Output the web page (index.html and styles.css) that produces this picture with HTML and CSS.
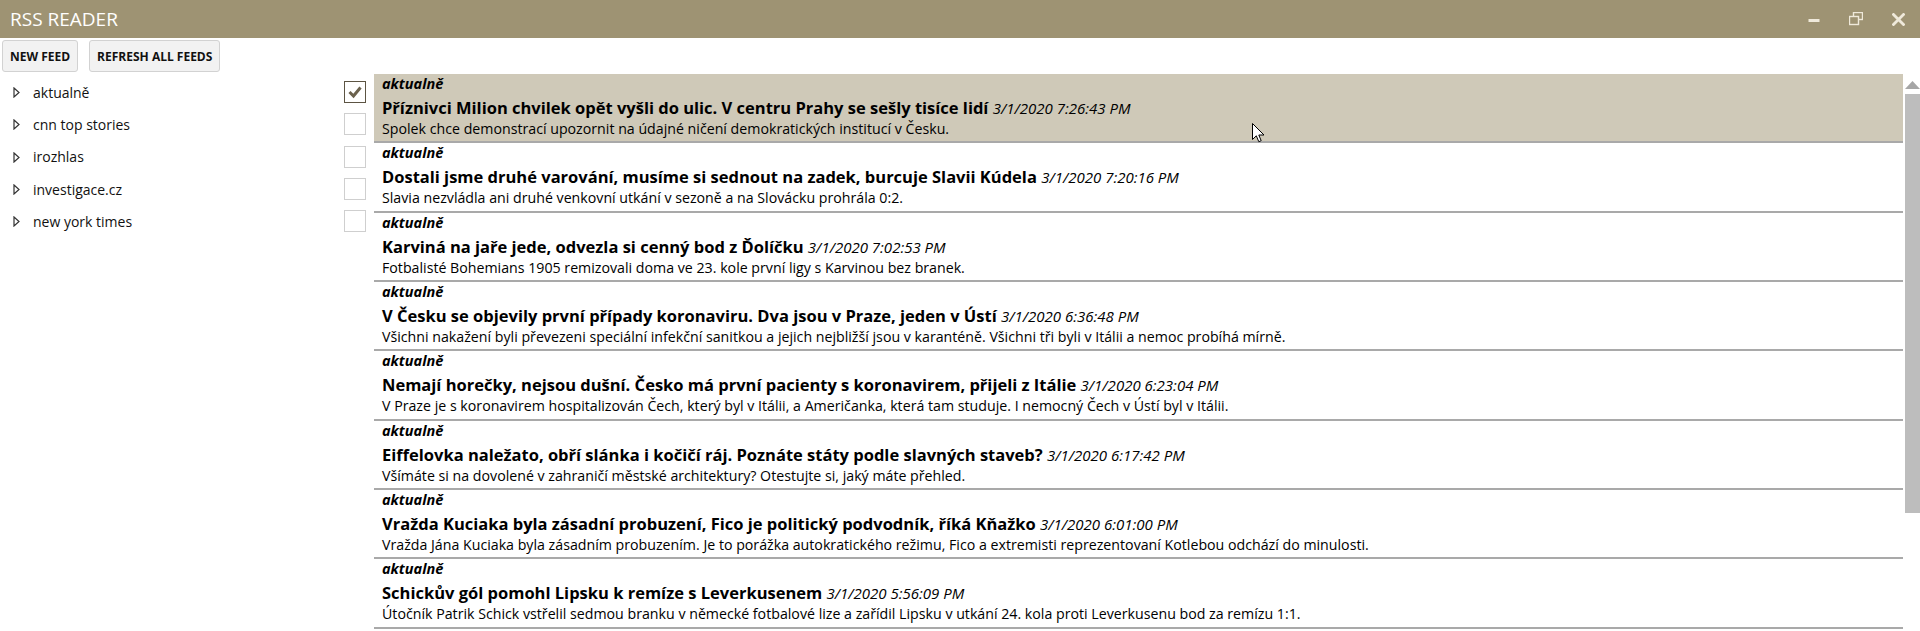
FILE: index.html
```html
<!DOCTYPE html>
<html lang="cs">
<head>
<meta charset="utf-8">
<title>RSS Reader</title>
<link rel="stylesheet" href="styles.css">
</head>
<body>
<div class="window">
  <header class="titlebar">
    <span class="app-title">RSS READER</span>
    <div class="win-controls">
      <span class="win-btn">
        <svg width="12" height="12" viewBox="0 0 12 12"><rect x="0.5" y="6" width="11" height="3" fill="#efe9da"/></svg>
      </span>
      <span class="win-btn">
        <svg width="14" height="14" viewBox="0 0 14 14">
          <rect x="4.5" y="0.5" width="9" height="7" fill="none" stroke="#efe9da" stroke-width="1.4"/>
          <rect x="0.5" y="4.5" width="9" height="8" fill="#9e9373" stroke="#efe9da" stroke-width="1.4"/>
        </svg>
      </span>
      <span class="win-btn">
        <svg width="13" height="13" viewBox="0 0 13 13"><path d="M1.5 1.5 L11.5 11.5 M11.5 1.5 L1.5 11.5" stroke="#efe9da" stroke-width="2.8" stroke-linecap="square"/></svg>
      </span>
    </div>
  </header>

  <div class="toolbar">
    <button class="btn">NEW FEED</button>
    <button class="btn">REFRESH ALL FEEDS</button>
  </div>

  <div class="main">
    <ul class="feeds">
      <li class="feed">
        <svg class="expander" width="7" height="11" viewBox="0 0 7 11"><path d="M1 1 L6 5.5 L1 10 Z" fill="none" stroke="#333" stroke-width="1.2"/></svg>
        <span class="feed-name">aktualně</span>
        <span class="check checked"><svg width="20" height="20" viewBox="0 0 20 20"><path d="M4.5 10 L8.5 14 L15.5 5.5" fill="none" stroke="#6b624d" stroke-width="3"/></svg></span>
      </li>
      <li class="feed">
        <svg class="expander" width="7" height="11" viewBox="0 0 7 11"><path d="M1 1 L6 5.5 L1 10 Z" fill="none" stroke="#333" stroke-width="1.2"/></svg>
        <span class="feed-name">cnn top stories</span>
        <span class="check"></span>
      </li>
      <li class="feed">
        <svg class="expander" width="7" height="11" viewBox="0 0 7 11"><path d="M1 1 L6 5.5 L1 10 Z" fill="none" stroke="#333" stroke-width="1.2"/></svg>
        <span class="feed-name">irozhlas</span>
        <span class="check"></span>
      </li>
      <li class="feed">
        <svg class="expander" width="7" height="11" viewBox="0 0 7 11"><path d="M1 1 L6 5.5 L1 10 Z" fill="none" stroke="#333" stroke-width="1.2"/></svg>
        <span class="feed-name">investigace.cz</span>
        <span class="check"></span>
      </li>
      <li class="feed">
        <svg class="expander" width="7" height="11" viewBox="0 0 7 11"><path d="M1 1 L6 5.5 L1 10 Z" fill="none" stroke="#333" stroke-width="1.2"/></svg>
        <span class="feed-name">new york times</span>
        <span class="check"></span>
      </li>
    </ul>

    <div class="list">
      <article class="item selected">
        <div class="source">aktualně</div>
        <div class="headline"><b>Příznivci Milion chvilek opět vyšli do ulic. V centru Prahy se sešly tisíce lidí</b> <i class="date">3/1/2020 7:26:43 PM</i></div>
        <div class="desc">Spolek chce demonstrací upozornit na údajné ničení demokratických institucí v Česku.</div>
      </article>
      <article class="item">
        <div class="source">aktualně</div>
        <div class="headline"><b>Dostali jsme druhé varování, musíme si sednout na zadek, burcuje Slavii Kúdela</b> <i class="date">3/1/2020 7:20:16 PM</i></div>
        <div class="desc">Slavia nezvládla ani druhé venkovní utkání v sezoně a na Slovácku prohrála 0:2.</div>
      </article>
      <article class="item">
        <div class="source">aktualně</div>
        <div class="headline"><b>Karviná na jaře jede, odvezla si cenný bod z Ďolíčku</b> <i class="date">3/1/2020 7:02:53 PM</i></div>
        <div class="desc">Fotbalisté Bohemians 1905 remizovali doma ve 23. kole první ligy s Karvinou bez branek.</div>
      </article>
      <article class="item">
        <div class="source">aktualně</div>
        <div class="headline"><b>V Česku se objevily první případy koronaviru. Dva jsou v Praze, jeden v Ústí</b> <i class="date">3/1/2020 6:36:48 PM</i></div>
        <div class="desc">Všichni nakažení byli převezeni speciální infekční sanitkou a jejich nejbližší jsou v karanténě. Všichni tři byli v Itálii a nemoc probíhá mírně.</div>
      </article>
      <article class="item">
        <div class="source">aktualně</div>
        <div class="headline"><b>Nemají horečky, nejsou dušní. Česko má první pacienty s koronavirem, přijeli z Itálie</b> <i class="date">3/1/2020 6:23:04 PM</i></div>
        <div class="desc">V Praze je s koronavirem hospitalizován Čech, který byl v Itálii, a Američanka, která tam studuje. I nemocný Čech v Ústí byl v Itálii.</div>
      </article>
      <article class="item">
        <div class="source">aktualně</div>
        <div class="headline"><b>Eiffelovka naležato, obří slánka i kočičí ráj. Poznáte státy podle slavných staveb?</b> <i class="date">3/1/2020 6:17:42 PM</i></div>
        <div class="desc">Všímáte si na dovolené v zahraničí městské architektury? Otestujte si, jaký máte přehled.</div>
      </article>
      <article class="item">
        <div class="source">aktualně</div>
        <div class="headline"><b>Vražda Kuciaka byla zásadní probuzení, Fico je politický podvodník, říká Kňažko</b> <i class="date">3/1/2020 6:01:00 PM</i></div>
        <div class="desc">Vražda Jána Kuciaka byla zásadním probuzením. Je to porážka autokratického režimu, Fico a extremisti reprezentovaní Kotlebou odchází do minulosti.</div>
      </article>
      <article class="item">
        <div class="source">aktualně</div>
        <div class="headline"><b>Schickův gól pomohl Lipsku k remíze s Leverkusenem</b> <i class="date">3/1/2020 5:56:09 PM</i></div>
        <div class="desc">Útočník Patrik Schick vstřelil sedmou branku v německé fotbalové lize a zařídil Lipsku v utkání 24. kola proti Leverkusenu bod za remízu 1:1.</div>
      </article>
    </div>

    <div class="scrollbar">
      <svg class="sb-arrow" width="15" height="8" viewBox="0 0 15 8"><path d="M7.5 0 L15 8 L0 8 Z" fill="#a6a6a6"/></svg>
      <div class="sb-thumb"></div>
    </div>
  </div>

  <svg class="cursor" width="13" height="20" viewBox="0 0 13 20"><path d="M0.5 0.5 L0.5 16.5 L4.3 12.8 L6.8 18.7 L9.2 17.7 L6.8 12 L12 12 Z" fill="#fff" stroke="#000" stroke-width="1" stroke-linejoin="miter"/></svg>
</div>
</body>
</html>
```

FILE: styles.css
```css
* { box-sizing: border-box; }

html, body {
  margin: 0;
  padding: 0;
  height: 100%;
  background: #ffffff;
  overflow: hidden;
}

body {
  font-family: "Segoe UI", "Open Sans", sans-serif;
  color: #000;
}

.window {
  position: relative;
  height: 100vh;
  display: flex;
  flex-direction: column;
}

.titlebar {
  height: 38px;
  flex: none;
  background: #9e9373;
  display: flex;
  align-items: center;
  justify-content: space-between;
}

.app-title {
  padding-left: 10px;
  color: #ffffff;
  font-size: 19px;
  line-height: 38px;
  font-weight: 400;
}

.win-controls {
  display: flex;
  height: 100%;
}

.win-btn {
  width: 42.5px;
  height: 100%;
  display: flex;
  align-items: center;
  justify-content: center;
}

.toolbar {
  flex: none;
  display: flex;
  gap: 11px;
  padding: 2px 0 2px 2px;
}

.btn {
  height: 32px;
  padding: 0 7px;
  background: #f2f2f2;
  border: 1px solid #d2d2d2;
  border-radius: 3px;
  font-family: inherit;
  font-size: 12px;
  font-weight: 700;
  color: #111;
}

.main {
  flex: 1;
  min-height: 0;
  display: flex;
}

.feeds {
  width: 374px;
  flex: none;
  margin: 0;
  padding: 2px 0 0 0;
  list-style: none;
}

.feed {
  height: 32.3px;
  display: flex;
  align-items: center;
  padding-left: 13px;
  padding-right: 8px;
}

.expander {
  flex: none;
  margin-top: 1px;
}

.feed-name {
  margin-left: 13px;
  font-size: 14px;
  color: #111;
}

.check {
  margin-left: auto;
  width: 22px;
  height: 22px;
  border: 1px solid #cfcfcf;
  background: #fff;
  display: flex;
  align-items: center;
  justify-content: center;
}

.check.checked {
  border-color: #5c5443;
}

.list {
  flex: 1;
  min-width: 0;
  margin-right: 2px;
  overflow: hidden;
}

.item {
  height: 69.33px;
  padding: 1px 0 0 8px;
  border-bottom: 2px solid #a9a9a9;
  white-space: nowrap;
}

.item.selected {
  background: #cfc9b8;
}

.source {
  font-size: 14.5px;
  line-height: 18px;
  height: 18px;
  font-weight: 700;
  font-style: italic;
}

.headline {
  font-size: 16.5px;
  line-height: 29px;
  height: 29px;
}

.headline b {
  font-weight: 700;
}

.date {
  font-size: 15px;
  line-height: 1;
  font-weight: 400;
  font-style: italic;
}

.desc {
  font-size: 14.2px;
  line-height: 14px;
  height: 14px;
}

.scrollbar {
  width: 15px;
  flex: none;
  display: flex;
  flex-direction: column;
  align-items: center;
  padding-top: 7px;
}

.sb-arrow {
  display: block;
}

.sb-thumb {
  margin-top: 5px;
  width: 15px;
  height: 419px;
  background: #bdbdbd;
}

.cursor {
  position: absolute;
  left: 1252px;
  top: 123px;
}
```
